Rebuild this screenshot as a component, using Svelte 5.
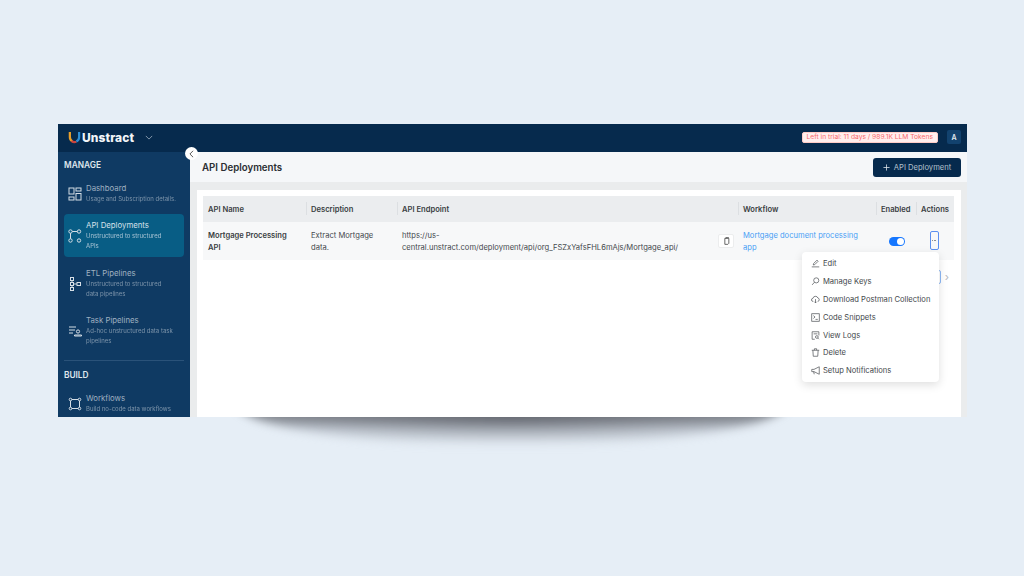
<script>
  const nav = [
    { title: "Dashboard", sub: ["Usage and Subscription details."], icon: "dash" },
    { title: "API Deployments", sub: ["Unstructured to structured", "APIs"], icon: "api", active: true },
    { title: "ETL Pipelines", sub: ["Unstructured to structured", "data pipelines"], icon: "etl" },
    { title: "Task Pipelines", sub: ["Ad-hoc unstructured data task", "pipelines"], icon: "task" },
  ];
  const menu = ["Edit", "Manage Keys", "Download Postman Collection", "Code Snippets", "View Logs", "Delete", "Setup Notifications"];
</script>

{#snippet navIcon(name)}
  <svg class="nav-icon" viewBox="0 0 14 14" fill="none" stroke="currentColor" stroke-width="1">
    {#if name === "dash"}
      <rect x="1" y="1" width="5" height="6" /><rect x="8" y="1" width="5" height="3" /><rect x="1" y="10" width="5" height="3" /><rect x="8" y="6.500" width="5" height="6.500" />
    {:else if name === "api"}
      <circle cx="2.500" cy="2.500" r="1.700" /><circle cx="11" cy="2.500" r="1.700" /><circle cx="2.500" cy="11.500" r="1.700" /><circle cx="11" cy="11.500" r="1.700" /><path d="M4.200 2.500h5.100M2.500 4.200v5.600" />
    {:else if name === "etl"}
      <rect x="2.500" y="0.500" width="3" height="3" /><rect x="2.500" y="5.500" width="3" height="3" /><rect x="2.500" y="10.500" width="3" height="3" /><rect x="9" y="5.500" width="3.500" height="3" /><path d="M4 3.500v2M4 8.500v2M5.500 7H9" />
    {:else if name === "task"}
      <path d="M1 3h7M1 6h6M1 9h4" /><circle cx="10" cy="7.500" r="1.600" /><path d="M6.500 12v-1h7v1z" />
    {:else}
      <circle cx="2.500" cy="2.500" r="1.300" /><circle cx="11.500" cy="2.500" r="1.300" /><circle cx="2.500" cy="11.500" r="1.300" /><circle cx="11.500" cy="11.500" r="1.300" /><path d="M3.800 2.500h6.400M3.800 11.500h6.400M2.500 3.800v6.400M11.500 3.800v6.400" />
    {/if}
  </svg>
{/snippet}

{#snippet menuIcon(name)}
  <svg class="menu-icon" viewBox="0 0 12 12" fill="none" stroke="currentColor" stroke-width="1">
    {#if name === "Edit"}
      <path d="M3 8l.5-2L8 1.500 9.500 3 5 7.500zM1 10.500h10" />
    {:else if name === "Manage Keys"}
      <circle cx="7" cy="4.500" r="3.400" /><path d="M4.600 7L1.500 10.500" />
    {:else if name === "Download Postman Collection"}
      <path d="M3 8.500H2.800a2 2 0 0 1-.3-4A3.500 3.500 0 0 1 9.200 4a2.300 2.300 0 0 1 0 4.500H9M6 5.500v5M4.500 9L6 10.500 7.500 9" />
    {:else if name === "Code Snippets"}
      <rect x="1" y="1" width="10" height="10" /><path d="M3.200 3.500l2.200 1.900-2.200 1.900M6 8.500h3" />
    {:else if name === "View Logs"}
      <path d="M5 11H1.500V1h9v5" /><path d="M3.500 3.800h5" /><circle cx="7.800" cy="8" r="1.800" /><path d="M9 9.400l1.500 1.500" />
    {:else if name === "Delete"}
      <path d="M1 3h10M4.500 3V1h3v2M2.500 3l.5 8h6l.5-8" />
    {:else}
      <path d="M1 4.500h3L11 1v10L4 7.500H1zM3.500 7.500l.8 3.500" />
    {/if}
  </svg>
{/snippet}

<div class="stage">
  <div class="shadow"></div>
  <div class="window">
    <header class="topbar">
      <div class="brand">
        <svg class="logo" viewBox="0 0 14 14" fill="none" stroke-width="2.400">
          <path d="M2 1V6.500A5 5 0 0 0 5 11.200" stroke="#e9a02c" />
          <path d="M3.800 10.600A5 5 0 0 0 9 11.600" stroke="#c9443f" />
          <path d="M12 1V6.500A5 5 0 0 1 9 11.200" stroke="#2d8fd5" />
        </svg>
        <span class="brand-name">Unstract</span>
        <svg class="caret" viewBox="0 0 10 6" fill="none" stroke="currentColor" stroke-width="1"><path d="M1 1l4 4 4-4" /></svg>
      </div>
      <div class="top-right">
        <span class="trial">Left in trial: 11 days / 989.1K LLM Tokens</span>
        <span class="avatar">A</span>
      </div>
    </header>
    <div class="body">
      <aside class="sidebar">
        <div class="section">MANAGE</div>
        {#each nav as item}
          <div class="nav-item" class:active={item.active}>
            {@render navIcon(item.icon)}
            <div class="nav-text">
              <div class="nav-title">{item.title}</div>
              {#each item.sub as line}
                <div class="nav-sub">{line}</div>
              {/each}
            </div>
          </div>
        {/each}
        <div class="divider"></div>
        <div class="section">BUILD</div>
        <div class="nav-item">
          {@render navIcon("flow")}
          <div class="nav-text">
            <div class="nav-title">Workflows</div>
            <div class="nav-sub">Build no-code data workflows</div>
          </div>
        </div>
      </aside>
      <button class="collapse" aria-label="Collapse">
        <svg viewBox="0 0 8 10" fill="none" stroke="#555" stroke-width="1.200"><path d="M6 1L2 5l4 4" /></svg>
      </button>
      <main class="content">
        <div class="page-head">
          <h1>API Deployments</h1>
          <button class="primary">
            <svg class="plus" viewBox="0 0 8 8" fill="none" stroke="currentColor" stroke-width="0.900"><path d="M4 0.500v7M0.500 4h7" /></svg>
            API Deployment
          </button>
        </div>
        <div class="card">
          <div class="table">
            <div class="cell th">API Name</div>
            <div class="cell th sep">Description</div>
            <div class="cell th sep">API Endpoint</div>
            <div class="cell th sep">Workflow</div>
            <div class="cell th sep">Enabled</div>
            <div class="cell th sep">Actions</div>
            <div class="cell td name">Mortgage Processing API</div>
            <div class="cell td">Extract Mortgage data.</div>
            <div class="cell td endpoint">
              <span>https://us-central.unstract.com/deployment/api/org_FSZxYafsFHL6mAjs/Mortgage_api/</span>
              <span class="copy">
                <svg viewBox="0 0 10 12" fill="none" stroke="#444" stroke-width="1.200"><path d="M2.500 2H8.500V9.500L7 11H2.500z" /><path d="M4 2V1h4.500" /></svg>
              </span>
            </div>
            <div class="cell td link">Mortgage document processing app</div>
            <div class="cell td center"><span class="switch"></span></div>
            <div class="cell td center"><span class="dots"><i></i><i></i><i></i></span></div>
          </div>
          <div class="pager"><span class="page-box"></span><span class="next">›</span></div>
          <div class="menu">
            {#each menu as label}
              <div class="menu-item">{@render menuIcon(label)}{label}</div>
            {/each}
          </div>
        </div>
      </main>
    </div>
  </div>
</div>

<style>
  :global(body) {
    margin: 0;
    background: #e6eef6;
  }

  .stage {
    position: relative;
    width: 1024px;
    height: 576px;
    padding: 124px 0 0 58px;
    box-sizing: border-box;
    overflow: hidden;
    font-family: Inter, "Liberation Sans", sans-serif;
    color: #2b2f33;
  }

  .shadow {
    position: absolute;
    left: 236px;
    top: 402px;
    width: 552px;
    height: 44px;
    border-radius: 0 0 50% 50% / 0 0 100% 100%;
    background:
      radial-gradient(ellipse 45% 60% at 50% 35%, rgba(60, 62, 70, 0.45), rgba(60, 62, 70, 0) 100%),
      linear-gradient(to bottom, rgba(110, 114, 122, 0.85) 35%, rgba(170, 177, 188, 0.6) 60%, rgba(230, 238, 246, 0) 100%);
    filter: blur(5px);
  }

  .window {
    position: relative;
    width: 909px;
    height: 293px;
    display: flex;
    flex-direction: column;
    overflow: hidden;
    background: #eaeced;
  }

  .topbar {
    flex: none;
    height: 28px;
    background: #062a4d;
    display: flex;
    align-items: center;
    justify-content: space-between;
    padding: 0 6px 2px 10px;
    box-sizing: border-box;
  }

  .brand {
    display: flex;
    align-items: center;
  }

  .logo {
    width: 13px;
    height: 13px;
    margin-right: 1px;
  }

  .brand-name {
    color: #f2f5f8;
    font-size: 12px;
    font-weight: 800;
    letter-spacing: 0.1px;
  }

  .caret {
    width: 8px;
    height: 5px;
    margin-left: 11px;
    color: #9fb0c0;
  }

  .top-right {
    display: flex;
    align-items: center;
    gap: 9px;
  }

  .trial {
    background: #ffefee;
    border: 1px solid #ffccc7;
    border-radius: 2px;
    color: #f8696b;
    font-size: 6.700px;
    line-height: 9px;
    padding: 0 4px;
    white-space: nowrap;
  }

  .avatar {
    width: 14px;
    height: 14px;
    border-radius: 2px;
    background: #12426e;
    color: #e4ebf2;
    font-size: 7px;
    font-weight: 600;
    display: flex;
    align-items: center;
    justify-content: center;
  }

  .body {
    position: relative;
    flex: 1;
    min-height: 0;
    display: flex;
  }

  .sidebar {
    flex: none;
    width: 132px;
    background: #0f3a63;
    padding: 8px 6px 0;
    box-sizing: border-box;
    overflow: hidden;
  }

  .section {
    color: #dfe6ed;
    font-size: 8.300px;
    font-weight: 600;
    line-height: 10px;
    margin-bottom: 7px;
  }

  .nav-item {
    display: flex;
    align-items: center;
    gap: 4px;
    padding: 6px 0 6px 4px;
    border-radius: 4px;
    margin-bottom: 4px;
    color: #9fb0c0;
  }

  .nav-item.active {
    background: #085d85;
    color: #d5e0ea;
    margin-bottom: 5px;
  }

  .nav-icon {
    width: 14px;
    height: 14px;
    flex: none;
    color: #d5dee6;
  }

  .nav-title {
    font-size: 7.800px;
    line-height: 11px;
    white-space: nowrap;
  }

  .nav-sub {
    font-size: 6px;
    line-height: 10px;
    opacity: 0.75;
    white-space: nowrap;
  }

  .divider {
    height: 1px;
    background: #2a5279;
    margin: 8px 0 9px;
  }

  .collapse {
    position: absolute;
    left: 127px;
    top: -5px;
    width: 13px;
    height: 13px;
    padding: 0;
    border: 0;
    border-radius: 50%;
    background: #fff;
    display: flex;
    align-items: center;
    justify-content: center;
    z-index: 2;
  }

  .collapse svg {
    width: 7px;
    height: 8px;
  }

  .content {
    flex: 1;
    min-width: 0;
    padding-right: 6px;
    display: flex;
    flex-direction: column;
  }

  .page-head {
    flex: none;
    height: 30px;
    background: #f5f7f9;
    margin-right: -6px;
    padding: 0 6px 0 12px;
    display: flex;
    align-items: center;
    justify-content: space-between;
  }

  h1 {
    margin: 0;
    font-size: 9.700px;
    font-weight: 600;
    color: #2a2e33;
  }

  .primary {
    height: 19px;
    width: 88px;
    border: 0;
    border-radius: 3px;
    background: #062a4d;
    color: #b4c1ce;
    font: 400 7.600px Inter, "Liberation Sans", sans-serif;
    display: flex;
    align-items: center;
    justify-content: center;
    gap: 4px;
    padding: 0;
  }

  .plus {
    width: 7px;
    height: 7px;
    color: #dde4ea;
  }

  .card {
    position: relative;
    flex: 1;
    margin: 8px 0 0 7px;
    padding: 6px;
    background: #fff;
  }

  .table {
    display: grid;
    grid-template-columns: 103px 91px 341px 138px 40px 38px;
  }

  .cell {
    font-size: 7.600px;
    line-height: 12px;
    padding: 1px 5px 0;
    box-sizing: border-box;
  }

  .th {
    height: 26px;
    background: #ebedef;
    font-weight: 600;
    color: #3a3e42;
    display: flex;
    align-items: center;
    position: relative;
  }

  .sep::before {
    content: "";
    position: absolute;
    left: 0;
    top: 6px;
    bottom: 7px;
    width: 1px;
    background: #dcdfe2;
  }

  .td {
    height: 38px;
    background: #f7f8f9;
    display: flex;
    align-items: center;
    color: #45494e;
  }

  .name {
    font-weight: 600;
    color: #3a3e42;
  }

  .endpoint {
    justify-content: space-between;
    padding-right: 4px;
  }

  .endpoint span:first-child {
    width: 290px;
    overflow-wrap: anywhere;
  }

  .copy {
    width: 16px;
    height: 14px;
    background: #fff;
    border: 1px solid #ecedee;
    border-radius: 2px;
    box-sizing: border-box;
    display: flex;
    align-items: center;
    justify-content: center;
    margin-top: -1px;
  }

  .copy svg {
    width: 7px;
    height: 8px;
  }

  .link {
    color: #4a9ff5;
  }

  .center {
    justify-content: center;
  }

  .switch {
    position: relative;
    left: 1px;
    width: 16px;
    height: 9px;
    border-radius: 5px;
    background: #1677ff;
  }

  .switch::after {
    content: "";
    position: absolute;
    right: 1px;
    top: 1px;
    width: 7px;
    height: 7px;
    border-radius: 50%;
    background: #fff;
  }

  .dots {
    position: relative;
    left: -1px;
    top: -1px;
    width: 9px;
    height: 19px;
    border: 1.500px solid #5b8ff0;
    border-radius: 2px;
    box-sizing: border-box;
    display: flex;
    align-items: center;
    justify-content: center;
    gap: 0.500px;
  }

  .dots i {
    width: 1px;
    height: 1px;
    background: #8a8d91;
  }

  .pager {
    position: absolute;
    right: 12px;
    top: 80px;
    display: flex;
    align-items: center;
    gap: 4px;
  }

  .page-box {
    width: 10px;
    height: 12px;
    border: 1px solid #8db8f5;
    border-radius: 2px;
  }

  .next {
    color: #b4b8bc;
    font-size: 11px;
    line-height: 12px;
  }

  .menu {
    position: absolute;
    left: 605px;
    top: 62px;
    width: 137px;
    padding: 3px 0 2px;
    background: #fff;
    border-radius: 4px;
    box-shadow: 0 3px 10px rgba(0, 0, 0, 0.13);
    z-index: 3;
  }

  .menu-item {
    height: 17.800px;
    display: flex;
    align-items: center;
    gap: 3px;
    padding-left: 9px;
    font-size: 7.600px;
    color: #44484c;
    white-space: nowrap;
  }

  .menu-icon {
    width: 9px;
    height: 9px;
    flex: none;
    color: #55595d;
  }
</style>
